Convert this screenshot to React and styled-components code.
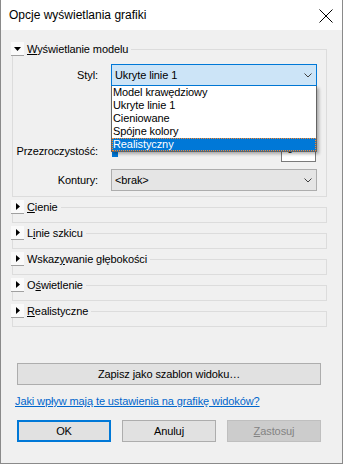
import React from 'react'
import styled, { createGlobalStyle } from 'styled-components'

const GlobalStyle = createGlobalStyle`
  body {
    margin: 0;
    font-family: "Liberation Sans", Arial, sans-serif;
  }
`

const Window = styled.div`
  width: 343px;
  height: 464px;
  box-sizing: border-box;
  border: 1px solid #8a8a8a;
  border-top: none;
  display: flex;
  flex-direction: column;
  color: #000;
`

const TitleBar = styled.div`
  height: 30px;
  flex: none;
  background: #fff;
  display: flex;
  align-items: center;
  justify-content: space-between;
  padding: 0 9px 0 8px;
  font-size: 12px;
`

const Close = styled.svg`
  margin-top: 2px;
`

const Body = styled.div`
  flex: 1;
  background: #f0f0f0;
  padding: 12px 15px 0 10px;
  display: flex;
  flex-direction: column;
  font-size: 11px;
  letter-spacing: -0.1px;
`

const Sections = styled.div`
  display: flex;
  flex-direction: column;
  gap: 3px;
`

const Header = styled.div`
  display: flex;
  height: 14px;
`

const Toggle = styled.div`
  width: 13px;
  height: 14px;
  box-sizing: border-box;
  background: #fafafa;
  border-bottom: 1px solid #a0a0a0;
  display: flex;
  align-items: center;
  justify-content: center;
`

const HeaderLabel = styled.span`
  margin-left: 3px;
  line-height: 14px;
  white-space: nowrap;
`

const Rule = styled.div`
  flex: 1;
  margin: 7px 0 0 3px;
  border-top: 1px solid #dcdcdc;
  border-right: 1px solid #dcdcdc;
`

const GroupBody = styled.div`
  margin-left: 1px;
  height: ${p => p.$height}px;
  box-sizing: border-box;
  border: 1px solid #dcdcdc;
  border-top: none;
  padding: 8px 9px 0 0;
`

const Field = styled.div`
  display: grid;
  grid-template-columns: 85px 1fr;
  column-gap: 13px;
  align-items: center;
  margin-top: ${p => p.$offset || 0}px;
`

const Label = styled.span`
  text-align: right;
  white-space: nowrap;
`

const Combo = styled.div`
  position: relative;
  height: 22px;
  box-sizing: border-box;
  display: flex;
  align-items: center;
  padding: 0 4px 0 3px;
  border: 1px solid ${p => (p.$focused ? '#0078d7' : '#adadad')};
  background: ${p => (p.$focused ? '#cce4f7' : '#e5e5e5')};
`

const Chevron = styled.svg`
  margin-left: auto;
`

const Popup = styled.ul`
  position: absolute;
  top: calc(100% + 1px);
  left: -1px;
  right: -1px;
  margin: 0;
  padding: 0;
  list-style: none;
  background: #fff;
  border: 1px solid #646464;
  border-top: none;
  box-shadow: 2px 2px 3px rgba(0, 0, 0, 0.3);
  z-index: 5;
`

const Option = styled.li`
  height: 13px;
  line-height: 13px;
  padding-left: 1px;
  box-sizing: border-box;
  white-space: nowrap;
  background: ${p => (p.$selected ? '#0078d7' : 'transparent')};
  color: ${p => (p.$selected ? '#fff' : '#000')};
  outline: ${p => (p.$selected ? '1px dotted #ff8728' : 'none')};
  outline-offset: -1px;
`

const SliderRow = styled.div`
  display: flex;
  gap: 8px;
  height: 22px;
`

const Slider = styled.div`
  flex: 1;
  display: flex;
  background: linear-gradient(#e7e7e7, #e7e7e7) no-repeat 0 9px / 100% 3px;
`

const Thumb = styled.div`
  width: 6px;
  height: 14px;
  margin: 3px 0 0 1px;
  background: #0078d7;
`

const SpinBox = styled.div`
  width: 35px;
  margin-right: 1px;
  box-sizing: border-box;
  border: 1px solid #7a7a7a;
  background: #fff;
  padding: 2px 0 0 5px;
  line-height: 13px;
`

const Footer = styled.div`
  margin-top: auto;
  padding: 0 6px 21px;
  display: flex;
  flex-direction: column;
`

const Button = styled.button`
  height: 22px;
  box-sizing: border-box;
  margin: 0;
  padding: 0;
  font: inherit;
  letter-spacing: inherit;
  color: ${p => (p.$disabled ? '#838383' : '#000')};
  background: ${p => (p.$disabled ? '#cccccc' : '#e1e1e1')};
  border: ${p =>
    p.$primary ? '2px solid #0078d7' : p.$disabled ? '1px solid #bfbfbf' : '1px solid #adadad'};
`

const Link = styled.a`
  margin: 9px 0 11px -2px;
  line-height: 15px;
  color: #0066cc;
  text-decoration: underline;
  white-space: nowrap;
`

const ButtonRow = styled.div`
  display: grid;
  grid-template-columns: repeat(3, 94px);
  column-gap: 11px;
`

function Arrow({ open }) {
  return open ? (
    <svg width="7" height="4" viewBox="0 0 7 4">
      <polygon points="0,0 7,0 3.5,4" fill="#000" />
    </svg>
  ) : (
    <svg width="4" height="7" viewBox="0 0 4 7">
      <polygon points="0,0 4,3.5 0,7" fill="#000" />
    </svg>
  )
}

function Mnemonic({ text, at }) {
  return (
    <>
      {text.slice(0, at)}
      <u>{text[at]}</u>
      {text.slice(at + 1)}
    </>
  )
}

function Section({ title, at, open, height, children }) {
  return (
    <div>
      <Header>
        <Toggle>
          <Arrow open={open} />
        </Toggle>
        <HeaderLabel>
          <Mnemonic text={title} at={at} />
        </HeaderLabel>
        <Rule />
      </Header>
      <GroupBody $height={height}>{children}</GroupBody>
    </div>
  )
}

function ChevronDown() {
  return (
    <Chevron width="8" height="5" viewBox="0 0 8 5">
      <polyline points="0.5,0.5 4,4 7.5,0.5" fill="none" stroke="#404040" strokeWidth="1" />
    </Chevron>
  )
}

const styles = ['Model krawędziowy', 'Ukryte linie 1', 'Cieniowane', 'Spójne kolory', 'Realistyczny']

const collapsed = [
  { title: 'Cienie', at: 0 },
  { title: 'Linie szkicu', at: 1 },
  { title: 'Wskazywanie głębokości', at: 5 },
  { title: 'Oświetlenie', at: 1 },
  { title: 'Realistyczne', at: 0 }
]

export default function App() {
  return (
    <>
      <GlobalStyle />
      <Window>
        <TitleBar>
          <span>Opcje wyświetlania grafiki</span>
          <Close width="14" height="14" viewBox="0 0 14 14">
            <path d="M0.5 0.5 L13.5 13.5 M13.5 0.5 L0.5 13.5" stroke="#000" strokeWidth="1" />
          </Close>
        </TitleBar>
        <Body>
          <Sections>
            <Section title="Wyświetlanie modelu" at={0} open height={141}>
              <Field>
                <Label>Styl:</Label>
                <Combo $focused>
                  <span>Ukryte linie 1</span>
                  <ChevronDown />
                  <Popup>
                    {styles.map((s, i) => (
                      <Option key={s} $selected={i === styles.length - 1}>
                        {s}
                      </Option>
                    ))}
                  </Popup>
                </Combo>
              </Field>
              <Field $offset={54}>
                <Label>Przezroczystość:</Label>
                <SliderRow>
                  <Slider>
                    <Thumb />
                  </Slider>
                  <SpinBox>0</SpinBox>
                </SliderRow>
              </Field>
              <Field $offset={7}>
                <Label>Kontury:</Label>
                <Combo>
                  <span>&lt;brak&gt;</span>
                  <ChevronDown />
                </Combo>
              </Field>
            </Section>
            {collapsed.map(s => (
              <Section key={s.title} title={s.title} at={s.at} height={8.5} />
            ))}
          </Sections>
          <Footer>
            <Button>Zapisz jako szablon widoku…</Button>
            <Link href="#">Jaki wpływ mają te ustawienia na grafikę widoków?</Link>
            <ButtonRow>
              <Button $primary>OK</Button>
              <Button>Anuluj</Button>
              <Button $disabled>
                <u>Z</u>astosuj
              </Button>
            </ButtonRow>
          </Footer>
        </Body>
      </Window>
    </>
  )
}
